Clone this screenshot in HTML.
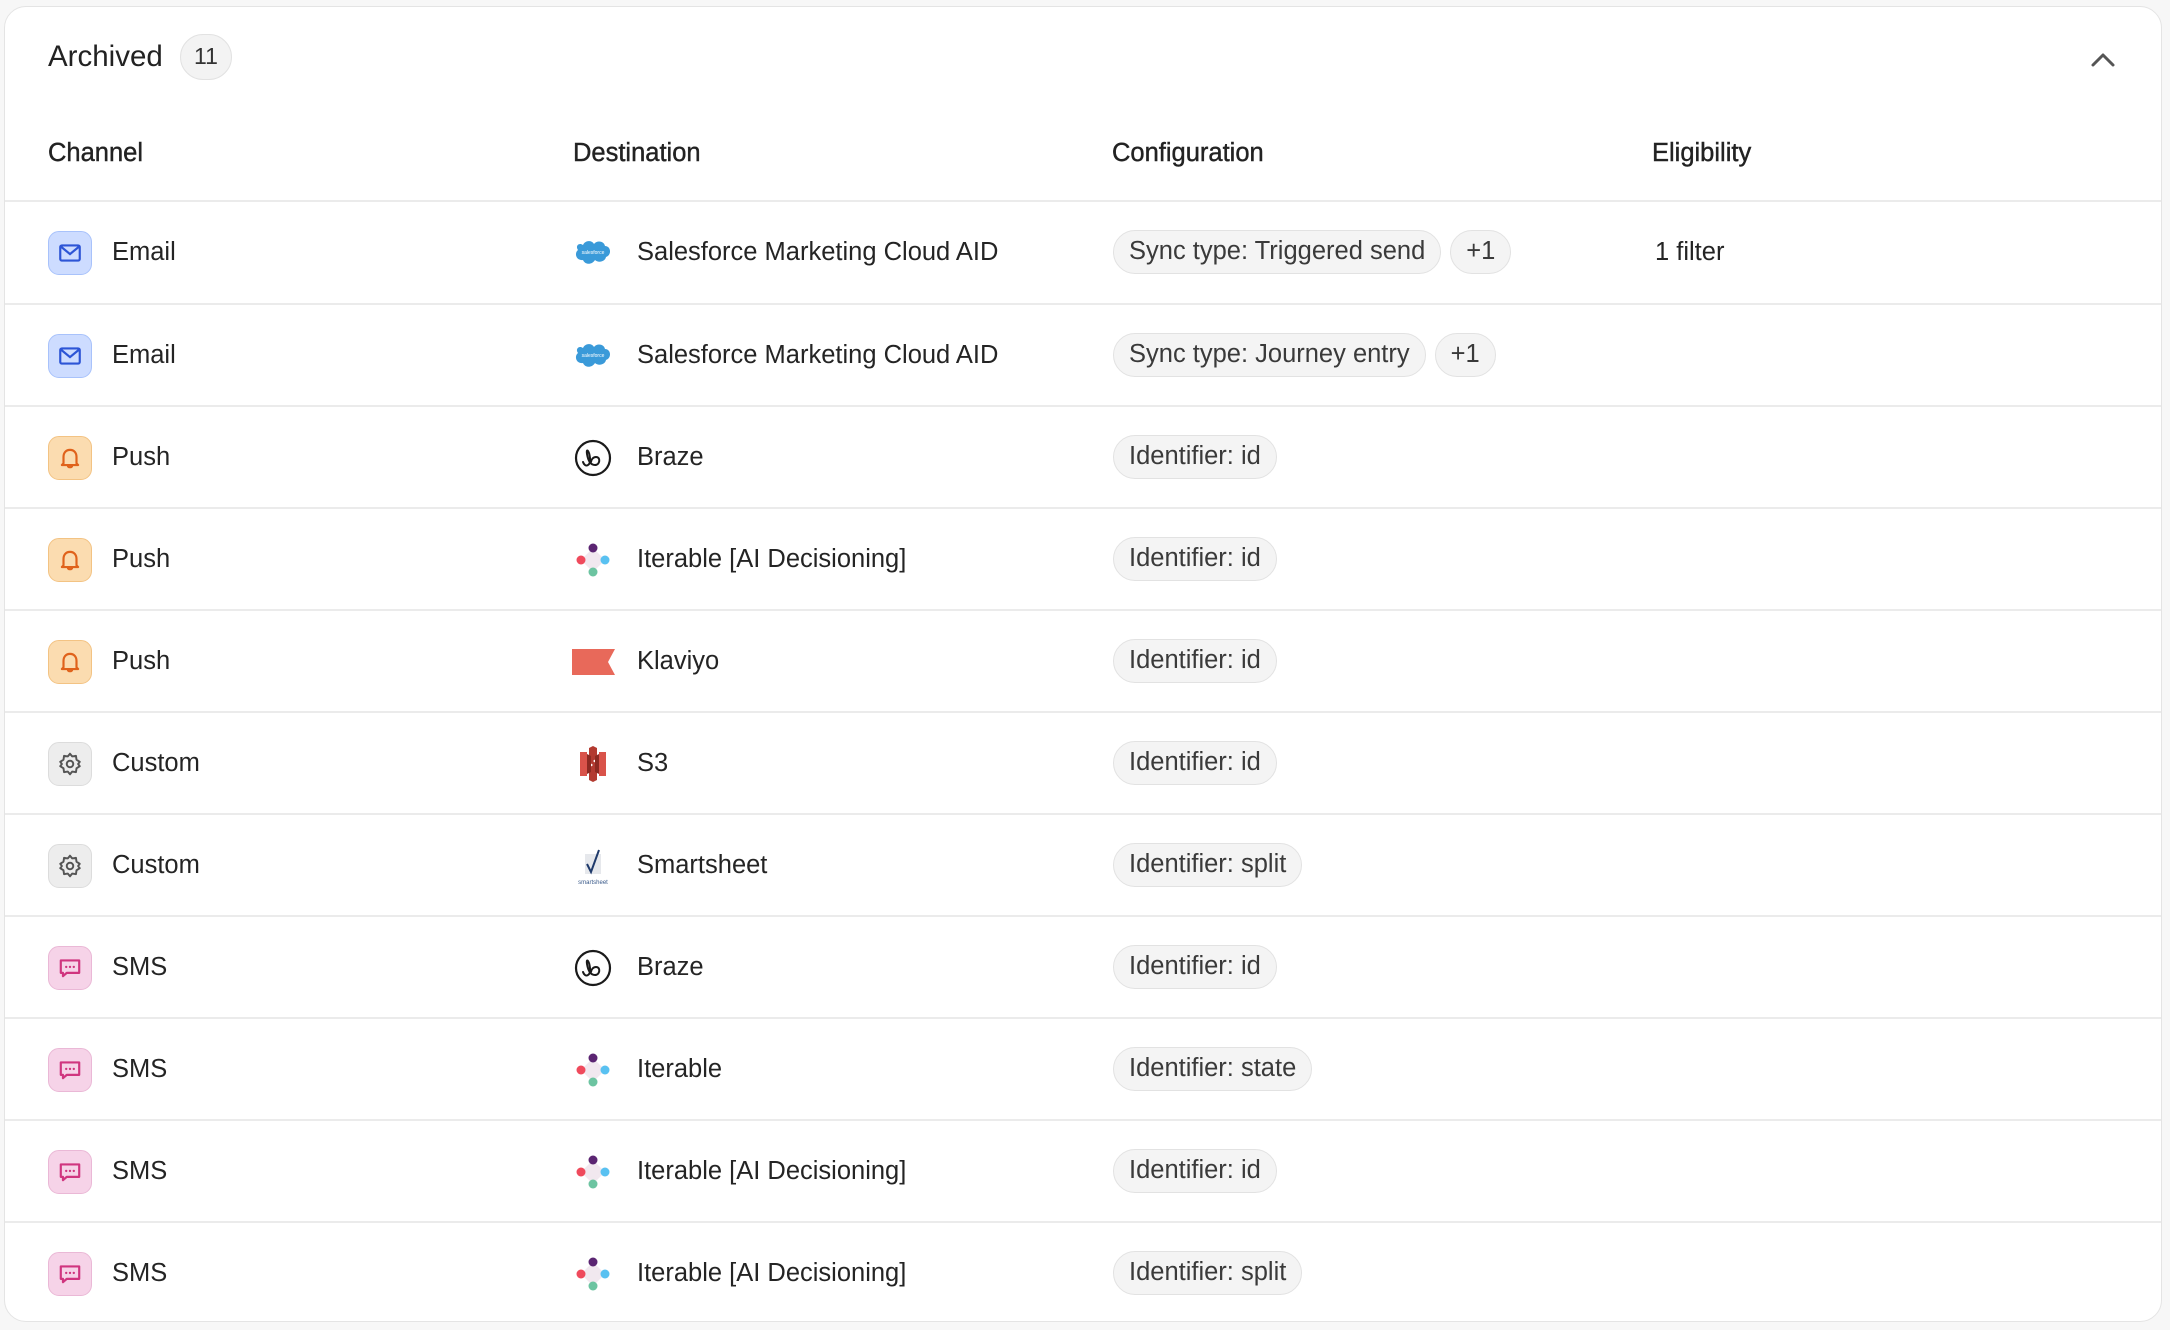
<!DOCTYPE html>
<html><head><meta charset="utf-8"><style>
*{box-sizing:border-box;margin:0;padding:0}
body{width:2170px;height:1330px;background:#f7f7f7;font-family:"Liberation Sans",Arial,sans-serif;color:#242424;overflow:hidden}
.card{position:absolute;left:4px;top:6px;width:2158px;height:1316px;background:#fff;border:1.5px solid #e4e4e4;border-radius:22px;overflow:hidden}
.title{position:absolute;left:43px;top:31px;font-size:29.5px;line-height:38px;color:#222}
.badge{position:absolute;left:175px;top:27px;width:52px;height:46px;border-radius:23px;background:#f3f3f3;border:1.5px solid #e2e2e2;font-size:23px;line-height:43px;text-align:center;color:#333}
.chev{position:absolute;left:2082px;top:38px}
.hdr{position:absolute;top:129px;font-size:25.5px;line-height:34px;color:#222;-webkit-text-stroke:0.4px #222}
.sep{position:absolute;left:0;right:0;height:1.5px;background:#ebebeb}
.row{position:absolute;left:0;right:0;height:101px}
.ic{position:absolute;left:43px;top:29px;width:44px;height:44px;border-radius:11px;display:flex;align-items:center;justify-content:center}
.t{position:absolute;top:33px;font-size:25.5px;line-height:34px;color:#242424;white-space:nowrap}
.logo{position:absolute;left:566px;top:29px;width:44px;height:44px;display:flex;align-items:center;justify-content:center}
.pills{position:absolute;left:1108px;top:28px;display:flex;gap:9px}
.pill{height:44px;border-radius:22px;background:#f4f4f4;border:1.5px solid #e2e2e2;font-size:25.5px;line-height:41px;padding:0 15px;color:#3a3a3a;white-space:nowrap}
.email{background:#cddcff;border:1.5px solid #a8c2fb}
.push{background:#fbdcb0;border:1.5px solid #f3c383}
.custom{background:#ededed;border:1.5px solid #dcdcdc}
.sms{background:#f6d3e8;border:1.5px solid #eab8d6}
</style></head><body>
<div class="card">
<div class="title">Archived</div>
<div class="badge">11</div>
<svg class="chev" width="32" height="28" viewBox="0 0 32 28"><path d="M6 20 L16 10 L26 20" fill="none" stroke="#555" stroke-width="3" stroke-linecap="round" stroke-linejoin="round"/></svg>
<div class="hdr" style="left:43px">Channel</div>
<div class="hdr" style="left:568px">Destination</div>
<div class="hdr" style="left:1107px">Configuration</div>
<div class="hdr" style="left:1647px">Eligibility</div>
<div class="sep" style="top:193px"></div>

<div class="row" style="top:195px">
<div class="ic email"><svg width="26" height="26" viewBox="0 0 24 24"><rect x="3" y="5" width="18" height="14" rx="1.5" fill="none" stroke="#2d55d6" stroke-width="2"/><path d="M3.5 6 L12 13 L20.5 6" fill="none" stroke="#2d55d6" stroke-width="2"/></svg></div>
<div class="t" style="left:107px">Email</div>
<div class="logo"><svg width="40" height="30" viewBox="0 0 40 30"><path d="M10 7 C12 2 19 2 21 6 C24 2 31 3 32 8 C38 8 39 17 33 19 C32 24 25 25 22 22 C19 27 12 27 10 22 C3 23 1 15 5 12 C2 8 6 4 10 7Z" fill="#3a9ad9"/><text x="20" y="16" font-size="5" fill="#fff" text-anchor="middle" font-family="Liberation Sans">salesforce</text></svg></div>
<div class="t" style="left:632px">Salesforce Marketing Cloud AID</div>
<div class="pills"><div class="pill">Sync type: Triggered send</div><div class="pill">+1</div></div>
<div class="t" style="left:1650px">1 filter</div>
</div>
<div class="sep" style="top:296px"></div>

<div class="row" style="top:298px">
<div class="ic email"><svg width="26" height="26" viewBox="0 0 24 24"><rect x="3" y="5" width="18" height="14" rx="1.5" fill="none" stroke="#2d55d6" stroke-width="2"/><path d="M3.5 6 L12 13 L20.5 6" fill="none" stroke="#2d55d6" stroke-width="2"/></svg></div>
<div class="t" style="left:107px">Email</div>
<div class="logo"><svg width="40" height="30" viewBox="0 0 40 30"><path d="M10 7 C12 2 19 2 21 6 C24 2 31 3 32 8 C38 8 39 17 33 19 C32 24 25 25 22 22 C19 27 12 27 10 22 C3 23 1 15 5 12 C2 8 6 4 10 7Z" fill="#3a9ad9"/><text x="20" y="16" font-size="5" fill="#fff" text-anchor="middle" font-family="Liberation Sans">salesforce</text></svg></div>
<div class="t" style="left:632px">Salesforce Marketing Cloud AID</div>
<div class="pills"><div class="pill">Sync type: Journey entry</div><div class="pill">+1</div></div>
</div>
<div class="sep" style="top:398px"></div>

<div class="row" style="top:400px">
<div class="ic push"><svg width="26" height="26" viewBox="0 0 24 24"><path d="M6 17 V11 C6 7 8.5 4.5 12 4.5 C15.5 4.5 18 7 18 11 V17 L19.5 18.5 H4.5 Z" fill="none" stroke="#e0621b" stroke-width="2" stroke-linejoin="round"/><path d="M10 19 C10 21 14 21 14 19" fill="none" stroke="#e0621b" stroke-width="2"/></svg></div>
<div class="t" style="left:107px">Push</div>
<div class="logo"><svg width="40" height="40" viewBox="0 0 40 40"><circle cx="20" cy="20" r="17" fill="none" stroke="#1a1a1a" stroke-width="2.2"/><path d="M10 24 C12 30 18 28 17 20 C16 12 13 10 14 16 C15 22 17 27 22 27 C27 27 28 19 23 19 C20 19 18 22 18 24" fill="none" stroke="#1a1a1a" stroke-width="2" stroke-linecap="round"/></svg></div>
<div class="t" style="left:632px">Braze</div>
<div class="pills"><div class="pill">Identifier: id</div></div>
</div>
<div class="sep" style="top:500px"></div>

<div class="row" style="top:502px">
<div class="ic push"><svg width="26" height="26" viewBox="0 0 24 24"><path d="M6 17 V11 C6 7 8.5 4.5 12 4.5 C15.5 4.5 18 7 18 11 V17 L19.5 18.5 H4.5 Z" fill="none" stroke="#e0621b" stroke-width="2" stroke-linejoin="round"/><path d="M10 19 C10 21 14 21 14 19" fill="none" stroke="#e0621b" stroke-width="2"/></svg></div>
<div class="t" style="left:107px">Push</div>
<div class="logo"><svg width="40" height="40" viewBox="0 0 40 40"><path d="M20 8 L32 20 L20 32 L8 20Z" fill="#f1e8ef"/><circle cx="20" cy="8" r="4.5" fill="#5b2572"/><circle cx="32" cy="20" r="4.5" fill="#59c1f1"/><circle cx="20" cy="32" r="4.5" fill="#6cc4a1"/><circle cx="8" cy="20" r="4.5" fill="#ef4a5c"/></svg></div>
<div class="t" style="left:632px">Iterable [AI Decisioning]</div>
<div class="pills"><div class="pill">Identifier: id</div></div>
</div>
<div class="sep" style="top:602px"></div>

<div class="row" style="top:604px">
<div class="ic push"><svg width="26" height="26" viewBox="0 0 24 24"><path d="M6 17 V11 C6 7 8.5 4.5 12 4.5 C15.5 4.5 18 7 18 11 V17 L19.5 18.5 H4.5 Z" fill="none" stroke="#e0621b" stroke-width="2" stroke-linejoin="round"/><path d="M10 19 C10 21 14 21 14 19" fill="none" stroke="#e0621b" stroke-width="2"/></svg></div>
<div class="t" style="left:107px">Push</div>
<div class="logo"><svg width="44" height="30" viewBox="0 0 44 30"><path d="M1 2 H44 L37 15 L44 28 H1Z" fill="#e8695a"/></svg></div>
<div class="t" style="left:632px">Klaviyo</div>
<div class="pills"><div class="pill">Identifier: id</div></div>
</div>
<div class="sep" style="top:704px"></div>

<div class="row" style="top:706px">
<div class="ic custom"><svg width="26" height="26" viewBox="0 0 24 24"><path d="M12 2.5 L14 5 L17.5 4.5 L18 8 L21 10 L19.5 12 L21 14 L18 16 L17.5 19.5 L14 19 L12 21.5 L10 19 L6.5 19.5 L6 16 L3 14 L4.5 12 L3 10 L6 8 L6.5 4.5 L10 5Z" fill="none" stroke="#555" stroke-width="1.8" stroke-linejoin="round"/><circle cx="12" cy="12" r="3" fill="none" stroke="#555" stroke-width="1.8"/></svg></div>
<div class="t" style="left:107px">Custom</div>
<div class="logo"><svg width="34" height="40" viewBox="0 0 34 40"><path d="M4 8 H11 V32 H4Z" fill="#d9534a"/><path d="M23 8 H30 V32 H23Z" fill="#d9534a"/><path d="M13 4 L17 2 L21 4 V14 L17 17 L21 20 V36 L17 38 L13 36 V24 L17 21 L13 18Z" fill="#b33a30"/><path d="M11 10 L15 12 V28 L11 30Z" fill="#8c2a22"/><path d="M23 10 L19 12 V28 L23 30Z" fill="#8c2a22"/></svg></div>
<div class="t" style="left:632px">S3</div>
<div class="pills"><div class="pill">Identifier: id</div></div>
</div>
<div class="sep" style="top:806px"></div>

<div class="row" style="top:808px">
<div class="ic custom"><svg width="26" height="26" viewBox="0 0 24 24"><path d="M12 2.5 L14 5 L17.5 4.5 L18 8 L21 10 L19.5 12 L21 14 L18 16 L17.5 19.5 L14 19 L12 21.5 L10 19 L6.5 19.5 L6 16 L3 14 L4.5 12 L3 10 L6 8 L6.5 4.5 L10 5Z" fill="none" stroke="#555" stroke-width="1.8" stroke-linejoin="round"/><circle cx="12" cy="12" r="3" fill="none" stroke="#555" stroke-width="1.8"/></svg></div>
<div class="t" style="left:107px">Custom</div>
<div class="logo"><svg width="44" height="44" viewBox="0 0 44 44"><rect x="14" y="10" width="16" height="20" fill="#e6e8ec"/><path d="M16 20 L20 28 L28 6" fill="none" stroke="#1f3a6b" stroke-width="2"/><text x="22" y="40" font-size="6" fill="#3a5a8a" text-anchor="middle" font-family="Liberation Sans">smartsheet</text></svg></div>
<div class="t" style="left:632px">Smartsheet</div>
<div class="pills"><div class="pill">Identifier: split</div></div>
</div>
<div class="sep" style="top:908px"></div>

<div class="row" style="top:910px">
<div class="ic sms"><svg width="26" height="26" viewBox="0 0 24 24"><path d="M3.5 5 H20.5 V16.5 H9 L5.5 19.5 V16.5 H3.5Z" fill="none" stroke="#d0357f" stroke-width="2" stroke-linejoin="round"/><circle cx="8.5" cy="11" r="1.1" fill="#d0357f"/><circle cx="12" cy="11" r="1.1" fill="#d0357f"/><circle cx="15.5" cy="11" r="1.1" fill="#d0357f"/></svg></div>
<div class="t" style="left:107px">SMS</div>
<div class="logo"><svg width="40" height="40" viewBox="0 0 40 40"><circle cx="20" cy="20" r="17" fill="none" stroke="#1a1a1a" stroke-width="2.2"/><path d="M10 24 C12 30 18 28 17 20 C16 12 13 10 14 16 C15 22 17 27 22 27 C27 27 28 19 23 19 C20 19 18 22 18 24" fill="none" stroke="#1a1a1a" stroke-width="2" stroke-linecap="round"/></svg></div>
<div class="t" style="left:632px">Braze</div>
<div class="pills"><div class="pill">Identifier: id</div></div>
</div>
<div class="sep" style="top:1010px"></div>

<div class="row" style="top:1012px">
<div class="ic sms"><svg width="26" height="26" viewBox="0 0 24 24"><path d="M3.5 5 H20.5 V16.5 H9 L5.5 19.5 V16.5 H3.5Z" fill="none" stroke="#d0357f" stroke-width="2" stroke-linejoin="round"/><circle cx="8.5" cy="11" r="1.1" fill="#d0357f"/><circle cx="12" cy="11" r="1.1" fill="#d0357f"/><circle cx="15.5" cy="11" r="1.1" fill="#d0357f"/></svg></div>
<div class="t" style="left:107px">SMS</div>
<div class="logo"><svg width="40" height="40" viewBox="0 0 40 40"><path d="M20 8 L32 20 L20 32 L8 20Z" fill="#f1e8ef"/><circle cx="20" cy="8" r="4.5" fill="#5b2572"/><circle cx="32" cy="20" r="4.5" fill="#59c1f1"/><circle cx="20" cy="32" r="4.5" fill="#6cc4a1"/><circle cx="8" cy="20" r="4.5" fill="#ef4a5c"/></svg></div>
<div class="t" style="left:632px">Iterable</div>
<div class="pills"><div class="pill">Identifier: state</div></div>
</div>
<div class="sep" style="top:1112px"></div>

<div class="row" style="top:1114px">
<div class="ic sms"><svg width="26" height="26" viewBox="0 0 24 24"><path d="M3.5 5 H20.5 V16.5 H9 L5.5 19.5 V16.5 H3.5Z" fill="none" stroke="#d0357f" stroke-width="2" stroke-linejoin="round"/><circle cx="8.5" cy="11" r="1.1" fill="#d0357f"/><circle cx="12" cy="11" r="1.1" fill="#d0357f"/><circle cx="15.5" cy="11" r="1.1" fill="#d0357f"/></svg></div>
<div class="t" style="left:107px">SMS</div>
<div class="logo"><svg width="40" height="40" viewBox="0 0 40 40"><path d="M20 8 L32 20 L20 32 L8 20Z" fill="#f1e8ef"/><circle cx="20" cy="8" r="4.5" fill="#5b2572"/><circle cx="32" cy="20" r="4.5" fill="#59c1f1"/><circle cx="20" cy="32" r="4.5" fill="#6cc4a1"/><circle cx="8" cy="20" r="4.5" fill="#ef4a5c"/></svg></div>
<div class="t" style="left:632px">Iterable [AI Decisioning]</div>
<div class="pills"><div class="pill">Identifier: id</div></div>
</div>
<div class="sep" style="top:1214px"></div>

<div class="row" style="top:1216px">
<div class="ic sms"><svg width="26" height="26" viewBox="0 0 24 24"><path d="M3.5 5 H20.5 V16.5 H9 L5.5 19.5 V16.5 H3.5Z" fill="none" stroke="#d0357f" stroke-width="2" stroke-linejoin="round"/><circle cx="8.5" cy="11" r="1.1" fill="#d0357f"/><circle cx="12" cy="11" r="1.1" fill="#d0357f"/><circle cx="15.5" cy="11" r="1.1" fill="#d0357f"/></svg></div>
<div class="t" style="left:107px">SMS</div>
<div class="logo"><svg width="40" height="40" viewBox="0 0 40 40"><path d="M20 8 L32 20 L20 32 L8 20Z" fill="#f1e8ef"/><circle cx="20" cy="8" r="4.5" fill="#5b2572"/><circle cx="32" cy="20" r="4.5" fill="#59c1f1"/><circle cx="20" cy="32" r="4.5" fill="#6cc4a1"/><circle cx="8" cy="20" r="4.5" fill="#ef4a5c"/></svg></div>
<div class="t" style="left:632px">Iterable [AI Decisioning]</div>
<div class="pills"><div class="pill">Identifier: split</div></div>
</div>
</div>
</body></html>
